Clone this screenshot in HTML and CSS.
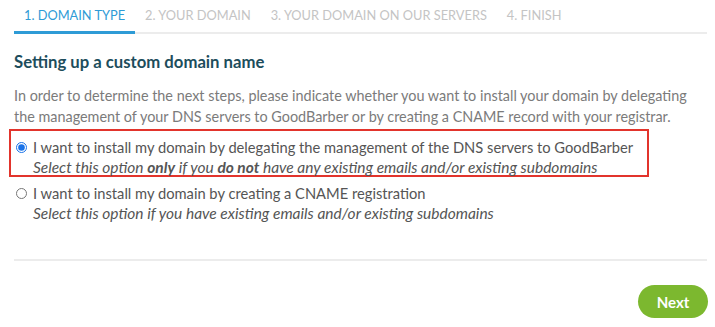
FILE: index.html
```html
<!DOCTYPE html>
<html>
<head>
<meta charset="utf-8">
<link rel="stylesheet" href="styles.css">
</head>
<body>
<div class="page">
  <nav class="tabs">
    <div class="tab active">1. DOMAIN TYPE</div>
    <div class="tab">2. YOUR DOMAIN</div>
    <div class="tab">3. YOUR DOMAIN ON OUR SERVERS</div>
    <div class="tab">4. FINISH</div>
  </nav>
  <h2 class="title">Setting up a custom domain name</h2>
  <p class="intro">In order to determine the next steps, please indicate whether you want to install your domain by delegating the management of your DNS servers to GoodBarber or by creating a CNAME record with your registrar.</p>
  <label class="option highlighted">
    <input type="radio" name="t" class="radio" checked>
    <span class="opt-text">
      <span class="opt-main">I want to install my domain by delegating the management of the DNS servers to GoodBarber</span>
      <span class="opt-sub">Select this option <b>only</b> if you <b>do not</b> have any existing emails and/or existing subdomains</span>
    </span>
  </label>
  <label class="option">
    <input type="radio" name="t" class="radio">
    <span class="opt-text">
      <span class="opt-main">I want to install my domain by creating a CNAME registration</span>
      <span class="opt-sub">Select this option if you have existing emails and/or existing subdomains</span>
    </span>
  </label>
  <div class="footer">
    <button class="next">Next</button>
  </div>
</div>
</body>
</html>
```

FILE: styles.css
```css
* { box-sizing: border-box; }
html, body { margin: 0; padding: 0; background: #fff; }
body { font-family: Lato, "Open Sans", sans-serif; }
.page { padding: 0 8px 0 14px; }
.tabs {
  display: flex;
  border-bottom: 2px solid #ececec;
  height: 34px;
}
.tab {
  padding: 7px 10px 0 10px;
  font-size: 12.8px;
  color: #c4c4c4;
  height: 34px;
}
.tab.active {
  color: #2e9bd6;
  border-bottom: 3px solid #2e9bd6;
  margin-bottom: -2px;
}
.title {
  margin: 18px 0 0 0;
  font-size: 16.7px;
  font-weight: 700;
  color: #1d4d5c;
  line-height: 20px;
}
.intro {
  margin: 13px 0 0 0;
  font-size: 14.4px;
  line-height: 21px;
  color: #7b7b7b;
}
.option {
  display: flex;
  align-items: flex-start;
  font-size: 14.7px;
  line-height: 20px;
  color: #555;
  margin-left: -5px;
  width: 640px;
  padding: 6px 0 0 5px;
  border: 2px solid transparent;
}
.option.highlighted {
  margin-top: 2px;
  border-color: #e2342c;
  height: 48px;
}
.option + .option { margin-top: 4px; padding-top: 0; }
.radio {
  margin: 5px 6px 0 0;
  width: 11px;
  height: 11px;
  accent-color: #1a73e8;
}
.opt-text { display: flex; flex-direction: column; }
.opt-sub { font-style: italic; font-size: 15.5px; }
.opt-sub b { font-weight: 700; }
.footer {
  margin-top: 34px;
  border-top: 2px solid #ececec;
  display: flex;
  justify-content: flex-end;
  padding-top: 24px;
}
.next {
  width: 70px;
  height: 33px;
  border: none;
  border-radius: 17px;
  background: #7cb82f;
  color: #fff;
  font-family: Lato, sans-serif;
  font-weight: 700;
  font-size: 15px;
  margin-right: -1px;
}
```
